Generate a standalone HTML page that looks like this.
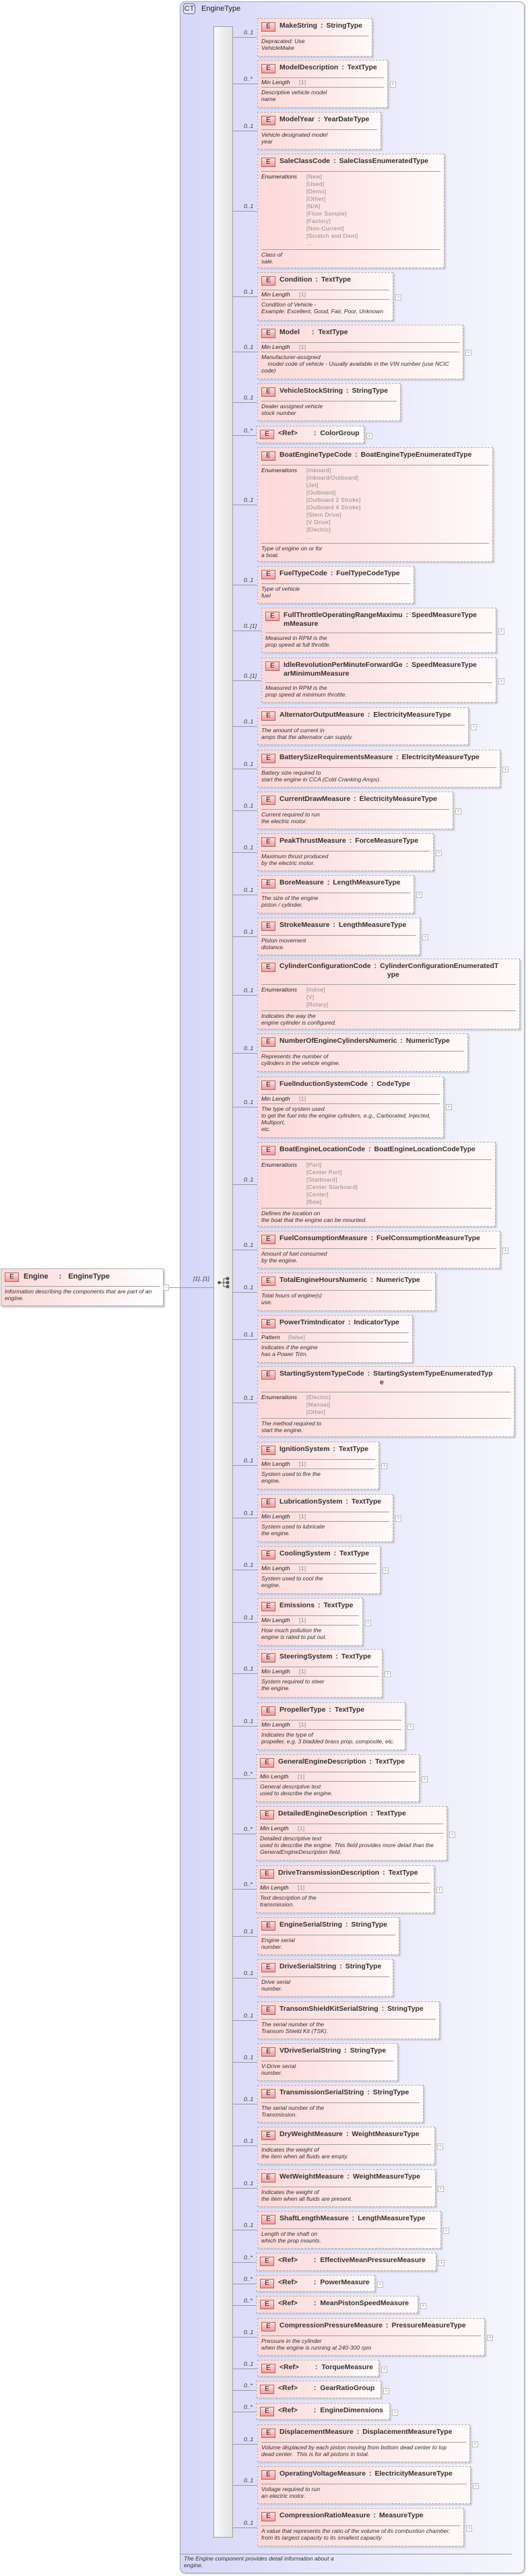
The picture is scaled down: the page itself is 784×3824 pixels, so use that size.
<!DOCTYPE html>
<html><head><meta charset="utf-8">
<style>
*{margin:0;padding:0;box-sizing:border-box}
body{width:784px;height:3824px;background:#fff;position:relative;font-family:"Liberation Sans",Arial,sans-serif;color:#333;overflow:hidden}
.ct{position:absolute;left:267px;top:2px;width:512px;height:3818px;border:1px solid #a8a8b8;border-radius:8px;background:linear-gradient(to right,#d6d6f8 0%,#e6e6fb 45%,#f6f6fd 100%);box-shadow:1px 1px 2px #bbb}
.cti{position:absolute;left:272px;top:5px;width:18px;height:16px;border:1px solid #6a6aa0;border-radius:4px;background:#e4e4fb;font:11px/14px "Liberation Sans",sans-serif;text-align:center;color:#333}
.ctt{position:absolute;left:299px;top:6px;font:11px/14px "Liberation Sans",sans-serif;color:#222}
.bar{position:absolute;left:317px;top:39px;width:29px;height:3728px;border:1px solid #a0a0a0;background:linear-gradient(to right,#fafafa,#e2e2e2)}
.b{position:absolute;left:382px;border:1px dashed #b0b0b0;background:linear-gradient(to right,#fdd8d8 0%,#fde6e6 45%,#fffafa 100%);box-shadow:2px 2px 2px #c8c8d0}
.e{position:absolute;left:5px;top:5px;width:21px;height:14px;border:1px solid #9a7070;background:linear-gradient(#fde0e0,#f49a9a);font:normal 10px/12px "Liberation Sans",sans-serif;color:#222;text-align:center}
.t{position:absolute;left:32px;top:4px;font:bold 10.4px/14px "Liberation Sans",sans-serif;white-space:nowrap;color:#333}
.t2{position:absolute;top:17px;font:bold 10.4px/14px "Liberation Sans",sans-serif;white-space:nowrap;color:#333}
.c{margin:0 5px}
.sp{height:25px}
.s{border-top:1px solid #a0a0a0;margin:0 5px}
.r{height:13px;font:italic 8.6px/13px "Liberation Sans",sans-serif;padding-left:5px;position:relative;color:#222}
.r .g{position:absolute;left:61px;top:0;font-style:normal;color:#888;letter-spacing:.3px}
.d{padding:2px 5px 0;font:italic 8.6px/10px "Liberation Sans",sans-serif;white-space:nowrap;color:#333}
.en{position:relative;padding:2px 5px 3px;font:italic 8.6px/11px "Liberation Sans",sans-serif;color:#222}
.en .v{margin-left:67px;font-style:normal;color:#8a8a8a;letter-spacing:.4px;font-size:8.4px}
.en .l{position:absolute;left:5px;top:2px}
.p{position:absolute;right:-13px;width:9px;height:9px;border:1px solid #bbb;background:#fff;font:normal 9px/7px "Liberation Sans",sans-serif;color:#aaa;text-align:center}
.ln{position:absolute;left:346px;width:36px;height:1px;background:#999}
.m{position:absolute;left:362px;font:italic 8.6px/10px "Liberation Sans",sans-serif;color:#333}
.foot{position:absolute;left:267px;top:3791px;width:493px;border-top:1px solid #999}
.ft{position:absolute;left:273px;top:3793px;font:italic 8.6px/10px "Liberation Sans",sans-serif;color:#333}
</style></head><body>
<div class="ct"></div>
<div class="cti">CT</div>
<div class="ctt">EngineType</div>
<div class="bar"></div>

<!-- Engine root -->
<div style="position:absolute;left:1px;top:1883px;width:242px;height:56px;border:1px solid #b0b0b0;background:linear-gradient(to right,#fdd8d8,#fff);box-shadow:2px 2px 2px #c8c8d0">
<i class="e">E</i><div class="t" style="left:33px;font-size:11px">Engine<span style="margin:0 10px 0 16px">:</span>EngineType</div>
<div class="sp"></div><div class="s"></div>
<div class="d">Information describing the components that are part of an<br>engine.</div>
</div>
<div style="position:absolute;left:242px;top:1907px;width:9px;height:9px;border:1px solid #bbb;background:#fff;font:9px/6px sans-serif;color:#aaa;text-align:center">−</div>
<div style="position:absolute;left:251px;top:1911px;width:66px;height:1px;background:#999"></div>
<div class="m" style="left:287px;top:1893px">[1]..[1]</div>
<svg style="position:absolute;left:323px;top:1895px" width="20" height="18" viewBox="0 0 20 18"><g fill="#555" stroke="#555"><line x1="2" y1="9" x2="9" y2="9"/><line x1="9" y1="3" x2="9" y2="15"/><line x1="9" y1="3" x2="15" y2="3"/><line x1="9" y1="9" x2="15" y2="9"/><line x1="9" y1="15" x2="15" y2="15"/><circle cx="2.5" cy="9" r="1.8"/><circle cx="15" cy="3" r="2"/><circle cx="15" cy="9" r="2"/><circle cx="15" cy="15" r="2"/></g></svg>

<!-- 1 -->
<div class="ln" style="top:55px"></div><div class="m" style="top:43px">0..1</div>
<div class="b" style="top:27px;height:57px;width:171px"><i class="e">E</i><div class="t">MakeString<span class="c">:</span>StringType</div><div class="sp"></div><div class="s"></div><div class="d">Depracated: Use<br>VehicleMake</div></div>
<!-- 2 -->
<div class="ln" style="top:124px"></div><div class="m" style="top:112px">0..*</div>
<div class="b" style="top:89px;height:71px;width:194px"><i class="e">E</i><div class="t">ModelDescription<span class="c">:</span>TextType</div><div class="sp"></div><div class="s"></div><div class="r"><i>Min Length</i><span class="g">[1]</span></div><div class="s"></div><div class="d">Descriptive vehicle model<br>name</div><i class="p" style="top:31px">+</i></div>
<!-- 3 -->
<div class="ln" style="top:194px"></div><div class="m" style="top:182px">0..1</div>
<div class="b" style="top:166px;height:56px;width:184px"><i class="e">E</i><div class="t">ModelYear<span class="c">:</span>YearDateType</div><div class="sp"></div><div class="s"></div><div class="d">Vehicle designated model<br>year</div></div>
<!-- 4 -->
<div class="ln" style="top:313px"></div><div class="m" style="top:301px">0..1</div>
<div class="b" style="top:228px;height:170px;width:278px"><i class="e">E</i><div class="t">SaleClassCode<span class="c">:</span>SaleClassEnumeratedType</div><div class="sp"></div><div class="s"></div><div class="en"><i class="l">Enumerations</i><div class="v">[New]<br>[Used]<br>[Demo]<br>[Other]<br>[N/A]<br>[Floor Sample]<br>[Factory]<br>[Non-Current]<br>[Scratch and Dent]<br>...</div></div><div class="s"></div><div class="d">Class of<br>sale.</div></div>
<!-- 5 -->
<div class="ln" style="top:440px"></div><div class="m" style="top:428px">0..1</div>
<div class="b" style="top:404px;height:72px;width:202px"><i class="e">E</i><div class="t">Condition<span class="c">:</span>TextType</div><div class="sp"></div><div class="s"></div><div class="r"><i>Min Length</i><span class="g">[1]</span></div><div class="s"></div><div class="d">Condition of Vehicle -<br>Example: Excellent, Good, Fair, Poor, Unknown</div><i class="p" style="top:32px">+</i></div>
<!-- 6 -->
<div class="ln" style="top:522px"></div><div class="m" style="top:510px">0..1</div>
<div class="b" style="top:482px;height:81px;width:306px"><i class="e">E</i><div class="t">Model<span class="c" style="margin:0 6px 0 18px">:</span>TextType</div><div class="sp"></div><div class="s"></div><div class="r"><i>Min Length</i><span class="g">[1]</span></div><div class="s"></div><div class="d">Manufacturer-assigned<br>&nbsp;&nbsp;&nbsp;&nbsp;model code of vehicle - Usually available in the VIN number (use NCIC<br>code)</div><i class="p" style="top:36px">+</i></div>
<!-- 7 -->
<div class="ln" style="top:597px"></div><div class="m" style="top:585px">0..1</div>
<div class="b" style="top:569px;height:56px;width:213px"><i class="e">E</i><div class="t">VehicleStockString<span class="c">:</span>StringType</div><div class="sp"></div><div class="s"></div><div class="d">Dealer assigned vehicle<br>stock number</div></div>
<!-- 8 -->
<div class="ln" style="top:646px"></div><div class="m" style="top:634px">0..*</div>
<div class="b" style="left:380px;top:632px;height:26px;width:161px"><i class="e">E</i><div class="t">&lt;Ref&gt;<span class="c" style="margin:0 6px 0 24px">:</span>ColorGroup</div><i class="p" style="top:10px">+</i></div>
<!-- 9 -->
<div class="ln" style="top:749px"></div><div class="m" style="top:737px">0..1</div>
<div class="b" style="top:664px;height:170px;width:350px"><i class="e">E</i><div class="t">BoatEngineTypeCode<span class="c">:</span>BoatEngineTypeEnumeratedType</div><div class="sp"></div><div class="s"></div><div class="en"><i class="l">Enumerations</i><div class="v">[Inboard]<br>[Inboard/Outboard]<br>[Jet]<br>[Outboard]<br>[Outboard 2 Stroke]<br>[Outboard 4 Stroke]<br>[Stern Drive]<br>[V Drive]<br>[Electric]<br>...</div></div><div class="s"></div><div class="d">Type of engine on or for<br>a boat.</div></div>
<!-- 10 -->
<div class="ln" style="top:868px"></div><div class="m" style="top:856px">0..1</div>
<div class="b" style="top:840px;height:56px;width:233px"><i class="e">E</i><div class="t">FuelTypeCode<span class="c">:</span>FuelTypeCodeType</div><div class="sp"></div><div class="s"></div><div class="d">Type of vehicle<br>fuel</div></div>
<!-- 11 -->
<div class="ln" style="top:936px;width:42px"></div><div class="m" style="top:924px">0..[1]</div>
<div class="b" style="left:388px;top:902px;height:67px;width:349px"><i class="e">E</i><div class="t">FullThrottleOperatingRangeMaximu<span class="c">:</span>SpeedMeasureType</div><div class="t2" style="left:32px">mMeasure</div><div class="sp" style="height:36px"></div><div class="s"></div><div class="d">Measured in RPM is the<br>prop speed at full throttle.</div><i class="p" style="top:30px">+</i></div>
<!-- 12 -->
<div class="ln" style="top:1010px;width:42px"></div><div class="m" style="top:998px">0..[1]</div>
<div class="b" style="left:388px;top:976px;height:67px;width:349px"><i class="e">E</i><div class="t">IdleRevolutionPerMinuteForwardGe<span class="c">:</span>SpeedMeasureType</div><div class="t2" style="left:32px">arMinimumMeasure</div><div class="sp" style="height:36px"></div><div class="s"></div><div class="d">Measured in RPM is the<br>prop speed at minimum throttle.</div><i class="p" style="top:30px">+</i></div>
<!-- 13 -->
<div class="ln" style="top:1078px"></div><div class="m" style="top:1066px">0..1</div>
<div class="b" style="top:1050px;height:56px;width:314px"><i class="e">E</i><div class="t">AlternatorOutputMeasure<span class="c">:</span>ElectricityMeasureType</div><div class="sp"></div><div class="s"></div><div class="d">The amount of current in<br>amps that the alternator can supply.</div><i class="p" style="top:24px">+</i></div>
<!-- 14 -->
<div class="ln" style="top:1141px"></div><div class="m" style="top:1129px">0..1</div>
<div class="b" style="top:1113px;height:56px;width:361px"><i class="e">E</i><div class="t">BatterySizeRequirementsMeasure<span class="c">:</span>ElectricityMeasureType</div><div class="sp"></div><div class="s"></div><div class="d">Battery size required to<br>start the engine in CCA (Cold Cranking Amps).</div><i class="p" style="top:24px">+</i></div>
<!-- 15 -->
<div class="ln" style="top:1203px"></div><div class="m" style="top:1191px">0..1</div>
<div class="b" style="top:1175px;height:56px;width:291px"><i class="e">E</i><div class="t">CurrentDrawMeasure<span class="c">:</span>ElectricityMeasureType</div><div class="sp"></div><div class="s"></div><div class="d">Current required to run<br>the electric motor.</div><i class="p" style="top:24px">+</i></div>
<!-- 16 -->
<div class="ln" style="top:1265px"></div><div class="m" style="top:1253px">0..1</div>
<div class="b" style="top:1237px;height:56px;width:262px"><i class="e">E</i><div class="t">PeakThrustMeasure<span class="c">:</span>ForceMeasureType</div><div class="sp"></div><div class="s"></div><div class="d">Maximum thrust produced<br>by the electric motor.</div><i class="p" style="top:24px">+</i></div>
<!-- 17 -->
<div class="ln" style="top:1328px"></div><div class="m" style="top:1316px">0..1</div>
<div class="b" style="top:1299px;height:57px;width:233px"><i class="e">E</i><div class="t">BoreMeasure<span class="c">:</span>LengthMeasureType</div><div class="sp"></div><div class="s"></div><div class="d">The size of the engine<br>piston / cylinder.</div><i class="p" style="top:24px">+</i></div>
<!-- 18 -->
<div class="ln" style="top:1390px"></div><div class="m" style="top:1378px">0..1</div>
<div class="b" style="top:1362px;height:56px;width:242px"><i class="e">E</i><div class="t">StrokeMeasure<span class="c">:</span>LengthMeasureType</div><div class="sp"></div><div class="s"></div><div class="d">Piston movement<br>distance.</div><i class="p" style="top:24px">+</i></div>
<!-- 19 -->
<div class="ln" style="top:1477px"></div><div class="m" style="top:1465px">0..1</div>
<div class="b" style="top:1423px;height:105px;width:390px"><i class="e">E</i><div class="t">CylinderConfigurationCode<span class="c">:</span>CylinderConfigurationEnumeratedT</div><div class="t2" style="left:192px">ype</div><div class="sp" style="height:37px"></div><div class="s"></div><div class="en"><i class="l">Enumerations</i><div class="v">[Inline]<br>[V]<br>[Rotary]</div></div><div class="s"></div><div class="d">Indicates the way the<br>engine cylinder is configured.</div></div>
<!-- 20 -->
<div class="ln" style="top:1563px"></div><div class="m" style="top:1551px">0..1</div>
<div class="b" style="top:1534px;height:57px;width:313px"><i class="e">E</i><div class="t">NumberOfEngineCylindersNumeric<span class="c">:</span>NumericType</div><div class="sp"></div><div class="s"></div><div class="d">Represents the number of<br>cylinders in the vehicle engine.</div></div>
<!-- 21 -->
<div class="ln" style="top:1643px"></div><div class="m" style="top:1631px">0..1</div>
<div class="b" style="top:1598px;height:91px;width:277px"><i class="e">E</i><div class="t">FuelInductionSystemCode<span class="c">:</span>CodeType</div><div class="sp"></div><div class="s"></div><div class="r"><i>Min Length</i><span class="g">[1]</span></div><div class="s"></div><div class="d">The type of system used<br>to get the fuel into the engine cylinders, e.g., Carborated, Injected,<br>Multiport,<br>etc.</div><i class="p" style="top:40px">+</i></div>
<!-- 22 -->
<div class="ln" style="top:1758px"></div><div class="m" style="top:1746px">0..1</div>
<div class="b" style="top:1695px;height:126px;width:354px"><i class="e">E</i><div class="t">BoatEngineLocationCode<span class="c">:</span>BoatEngineLocationCodeType</div><div class="sp"></div><div class="s"></div><div class="en"><i class="l">Enumerations</i><div class="v">[Port]<br>[Center Port]<br>[Starboard]<br>[Center Starboard]<br>[Center]<br>[Bow]</div></div><div class="s"></div><div class="d">Defines the location on<br>the boat that the engine can be mounted.</div></div>
<!-- 23 -->
<div class="ln" style="top:1855px"></div><div class="m" style="top:1843px">0..1</div>
<div class="b" style="top:1827px;height:56px;width:361px"><i class="e">E</i><div class="t">FuelConsumptionMeasure<span class="c">:</span>FuelConsumptionMeasureType</div><div class="sp"></div><div class="s"></div><div class="d">Amount of fuel consumed<br>by the engine.</div><i class="p" style="top:24px">+</i></div>
<!-- 24 -->
<div class="ln" style="top:1918px"></div><div class="m" style="top:1906px">0..1</div>
<div class="b" style="top:1889px;height:57px;width:265px"><i class="e">E</i><div class="t">TotalEngineHoursNumeric<span class="c">:</span>NumericType</div><div class="sp"></div><div class="s"></div><div class="d">Total hours of engine(s)<br>use.</div></div>
<!-- 25 -->
<div class="ln" style="top:1988px"></div><div class="m" style="top:1976px">0..1</div>
<div class="b" style="top:1952px;height:71px;width:231px"><i class="e">E</i><div class="t">PowerTrimIndicator<span class="c">:</span>IndicatorType</div><div class="sp"></div><div class="s"></div><div class="r"><i>Pattern</i><span class="g" style="left:45px">[false]</span></div><div class="s"></div><div class="d">Indicates if the engine<br>has a Power Trim.</div></div>
<!-- 26 -->
<div class="ln" style="top:2082px"></div><div class="m" style="top:2070px">0..1</div>
<div class="b" style="top:2028px;height:105px;width:382px"><i class="e">E</i><div class="t">StartingSystemTypeCode<span class="c">:</span>StartingSystemTypeEnumeratedTyp</div><div class="t2" style="left:181px">e</div><div class="sp" style="height:37px"></div><div class="s"></div><div class="en"><i class="l">Enumerations</i><div class="v">[Electric]<br>[Manual]<br>[Other]</div></div><div class="s"></div><div class="d">The method required to<br>start the engine.</div></div>
<!-- 27 -->
<div class="ln" style="top:2175px"></div><div class="m" style="top:2163px">0..1</div>
<div class="b" style="top:2140px;height:71px;width:181px"><i class="e">E</i><div class="t">IgnitionSystem<span class="c">:</span>TextType</div><div class="sp"></div><div class="s"></div><div class="r"><i>Min Length</i><span class="g">[1]</span></div><div class="s"></div><div class="d">System used to fire the<br>engine.</div><i class="p" style="top:31px">+</i></div>
<!-- 28 -->
<div class="ln" style="top:2253px"></div><div class="m" style="top:2241px">0..1</div>
<div class="b" style="top:2218px;height:71px;width:202px"><i class="e">E</i><div class="t">LubricationSystem<span class="c">:</span>TextType</div><div class="sp"></div><div class="s"></div><div class="r"><i>Min Length</i><span class="g">[1]</span></div><div class="s"></div><div class="d">System used to lubricate<br>the engine.</div><i class="p" style="top:31px">+</i></div>
<!-- 29 -->
<div class="ln" style="top:2330px"></div><div class="m" style="top:2318px">0..1</div>
<div class="b" style="top:2295px;height:71px;width:183px"><i class="e">E</i><div class="t">CoolingSystem<span class="c">:</span>TextType</div><div class="sp"></div><div class="s"></div><div class="r"><i>Min Length</i><span class="g">[1]</span></div><div class="s"></div><div class="d">System used to cool the<br>engine.</div><i class="p" style="top:31px">+</i></div>
<!-- 30 -->
<div class="ln" style="top:2408px"></div><div class="m" style="top:2396px">0..1</div>
<div class="b" style="top:2372px;height:71px;width:157px"><i class="e">E</i><div class="t">Emissions<span class="c">:</span>TextType</div><div class="sp"></div><div class="s"></div><div class="r"><i>Min Length</i><span class="g">[1]</span></div><div class="s"></div><div class="d">How much pollution the<br>engine is rated to put out.</div><i class="p" style="top:32px">+</i></div>
<!-- 31 -->
<div class="ln" style="top:2484px"></div><div class="m" style="top:2472px">0..1</div>
<div class="b" style="top:2448px;height:72px;width:186px"><i class="e">E</i><div class="t">SteeringSystem<span class="c">:</span>TextType</div><div class="sp"></div><div class="s"></div><div class="r"><i>Min Length</i><span class="g">[1]</span></div><div class="s"></div><div class="d">System required to steer<br>the engine.</div><i class="p" style="top:32px">+</i></div>
<!-- 32 -->
<div class="ln" style="top:2562px"></div><div class="m" style="top:2550px">0..1</div>
<div class="b" style="top:2527px;height:71px;width:220px"><i class="e">E</i><div class="t">PropellerType<span class="c">:</span>TextType</div><div class="sp"></div><div class="s"></div><div class="r"><i>Min Length</i><span class="g">[1]</span></div><div class="s"></div><div class="d">Indicates the type of<br>propeller, e.g. 3 bladded brass prop, composite, etc.</div><i class="p" style="top:31px">+</i></div>
<!-- 33 -->
<div class="ln" style="top:2640px"></div><div class="m" style="top:2628px">0..*</div>
<div class="b" style="left:380px;top:2604px;height:71px;width:243px"><i class="e">E</i><div class="t">GeneralEngineDescription<span class="c">:</span>TextType</div><div class="sp"></div><div class="s"></div><div class="r"><i>Min Length</i><span class="g">[1]</span></div><div class="s"></div><div class="d">General descriptive text<br>used to describe the engine.</div><i class="p" style="top:32px">+</i></div>
<!-- 34 -->
<div class="ln" style="top:2722px"></div><div class="m" style="top:2710px">0..*</div>
<div class="b" style="left:380px;top:2681px;height:81px;width:284px"><i class="e">E</i><div class="t">DetailedEngineDescription<span class="c">:</span>TextType</div><div class="sp"></div><div class="s"></div><div class="r"><i>Min Length</i><span class="g">[1]</span></div><div class="s"></div><div class="d">Detailed descriptive text<br>used to describe the engine. This field provides more detail than the<br>GeneralEngineDescription field.</div><i class="p" style="top:37px">+</i></div>
<!-- 35 -->
<div class="ln" style="top:2804px"></div><div class="m" style="top:2792px">0..*</div>
<div class="b" style="left:380px;top:2769px;height:71px;width:265px"><i class="e">E</i><div class="t">DriveTransmissionDescription<span class="c">:</span>TextType</div><div class="sp"></div><div class="s"></div><div class="r"><i>Min Length</i><span class="g">[1]</span></div><div class="s"></div><div class="d">Text description of the<br>transmission.</div><i class="p" style="top:31px">+</i></div>
<!-- 36 -->
<div class="ln" style="top:2874px"></div><div class="m" style="top:2862px">0..1</div>
<div class="b" style="top:2846px;height:56px;width:211px"><i class="e">E</i><div class="t">EngineSerialString<span class="c">:</span>StringType</div><div class="sp"></div><div class="s"></div><div class="d">Engine serial<br>number.</div></div>
<!-- 37 -->
<div class="ln" style="top:2936px"></div><div class="m" style="top:2924px">0..1</div>
<div class="b" style="top:2908px;height:56px;width:202px"><i class="e">E</i><div class="t">DriveSerialString<span class="c">:</span>StringType</div><div class="sp"></div><div class="s"></div><div class="d">Drive serial<br>number.</div></div>
<!-- 38 -->
<div class="ln" style="top:2999px"></div><div class="m" style="top:2987px">0..1</div>
<div class="b" style="top:2971px;height:56px;width:271px"><i class="e">E</i><div class="t">TransomShieldKitSerialString<span class="c">:</span>StringType</div><div class="sp"></div><div class="s"></div><div class="d">The serial number of the<br>Transom Shield Kit (TSK).</div></div>
<!-- 39 -->
<div class="ln" style="top:3061px"></div><div class="m" style="top:3049px">0..1</div>
<div class="b" style="top:3033px;height:56px;width:209px"><i class="e">E</i><div class="t">VDriveSerialString<span class="c">:</span>StringType</div><div class="sp"></div><div class="s"></div><div class="d">V-Drive serial<br>number.</div></div>
<!-- 40 -->
<div class="ln" style="top:3123px"></div><div class="m" style="top:3111px">0..1</div>
<div class="b" style="top:3095px;height:56px;width:247px"><i class="e">E</i><div class="t">TransmissionSerialString<span class="c">:</span>StringType</div><div class="sp"></div><div class="s"></div><div class="d">The serial number of the<br>Transmission.</div></div>
<!-- 41 -->
<div class="ln" style="top:3185px"></div><div class="m" style="top:3173px">0..1</div>
<div class="b" style="top:3157px;height:56px;width:264px"><i class="e">E</i><div class="t">DryWeightMeasure<span class="c">:</span>WeightMeasureType</div><div class="sp"></div><div class="s"></div><div class="d">Indicates the weight of<br>the item when all fluids are empty.</div><i class="p" style="top:24px">+</i></div>
<!-- 42 -->
<div class="ln" style="top:3248px"></div><div class="m" style="top:3236px">0..1</div>
<div class="b" style="top:3220px;height:56px;width:265px"><i class="e">E</i><div class="t">WetWeightMeasure<span class="c">:</span>WeightMeasureType</div><div class="sp"></div><div class="s"></div><div class="d">Indicates the weight of<br>the item when all fluids are present.</div><i class="p" style="top:24px">+</i></div>
<!-- 43 -->
<div class="ln" style="top:3310px"></div><div class="m" style="top:3298px">0..1</div>
<div class="b" style="top:3282px;height:56px;width:273px"><i class="e">E</i><div class="t">ShaftLengthMeasure<span class="c">:</span>LengthMeasureType</div><div class="sp"></div><div class="s"></div><div class="d">Length of the shaft on<br>which the prop mounts.</div><i class="p" style="top:24px">+</i></div>
<!-- 44 -->
<div class="ln" style="top:3358px"></div><div class="m" style="top:3346px">0..*</div>
<div class="b" style="left:380px;top:3344px;height:27px;width:268px"><i class="e">E</i><div class="t">&lt;Ref&gt;<span class="c" style="margin:0 6px 0 24px">:</span>EffectiveMeanPressureMeasure</div><i class="p" style="top:10px">+</i></div>
<!-- 45 -->
<div class="ln" style="top:3390px"></div><div class="m" style="top:3378px">0..*</div>
<div class="b" style="left:380px;top:3377px;height:25px;width:177px"><i class="e">E</i><div class="t">&lt;Ref&gt;<span class="c" style="margin:0 6px 0 24px">:</span>PowerMeasure</div><i class="p" style="top:9px">+</i></div>
<!-- 46 -->
<div class="ln" style="top:3422px"></div><div class="m" style="top:3410px">0..*</div>
<div class="b" style="left:380px;top:3408px;height:26px;width:241px"><i class="e">E</i><div class="t">&lt;Ref&gt;<span class="c" style="margin:0 6px 0 24px">:</span>MeanPistonSpeedMeasure</div><i class="p" style="top:10px">+</i></div>
<!-- 47 -->
<div class="ln" style="top:3469px"></div><div class="m" style="top:3457px">0..1</div>
<div class="b" style="top:3441px;height:56px;width:338px"><i class="e">E</i><div class="t">CompressionPressureMeasure<span class="c">:</span>PressureMeasureType</div><div class="sp"></div><div class="s"></div><div class="d">Pressure in the cylinder<br>when the engine is running at 240-300 rpm</div><i class="p" style="top:24px">+</i></div>
<!-- 48 -->
<div class="ln" style="top:3516px"></div><div class="m" style="top:3504px">0..1</div>
<div class="b" style="top:3503px;height:25px;width:181px"><i class="e">E</i><div class="t">&lt;Ref&gt;<span class="c" style="margin:0 6px 0 24px">:</span>TorqueMeasure</div><i class="p" style="top:9px">+</i></div>
<!-- 49 -->
<div class="ln" style="top:3548px"></div><div class="m" style="top:3536px">0..*</div>
<div class="b" style="left:380px;top:3534px;height:26px;width:186px"><i class="e">E</i><div class="t">&lt;Ref&gt;<span class="c" style="margin:0 6px 0 24px">:</span>GearRatioGroup</div><i class="p" style="top:10px">+</i></div>
<!-- 50 -->
<div class="ln" style="top:3580px"></div><div class="m" style="top:3568px">0..*</div>
<div class="b" style="left:380px;top:3567px;height:25px;width:199px"><i class="e">E</i><div class="t">&lt;Ref&gt;<span class="c" style="margin:0 6px 0 24px">:</span>EngineDimensions</div><i class="p" style="top:9px">+</i></div>
<!-- 51 -->
<div class="ln" style="top:3628px"></div><div class="m" style="top:3616px">0..1</div>
<div class="b" style="top:3599px;height:56px;width:316px"><i class="e">E</i><div class="t">DisplacementMeasure<span class="c">:</span>DisplacementMeasureType</div><div class="sp"></div><div class="s"></div><div class="d">Volume displaced by each piston moving from bottom dead center to top<br>dead center.&nbsp; This is for all pistons in total.</div><i class="p" style="top:24px">+</i></div>
<!-- 52 -->
<div class="ln" style="top:3689px"></div><div class="m" style="top:3677px">0..1</div>
<div class="b" style="top:3661px;height:56px;width:317px"><i class="e">E</i><div class="t">OperatingVoltageMeasure<span class="c">:</span>ElectricityMeasureType</div><div class="sp"></div><div class="s"></div><div class="d">Voltage required to run<br>an electric motor.</div><i class="p" style="top:24px">+</i></div>
<!-- 53 -->
<div class="ln" style="top:3752px"></div><div class="m" style="top:3740px">0..1</div>
<div class="b" style="top:3723px;height:57px;width:307px"><i class="e">E</i><div class="t">CompressionRatioMeasure<span class="c">:</span>MeasureType</div><div class="sp"></div><div class="s"></div><div class="d">A value that represents the ratio of the volume of its combustion chamber;<br>from its largest capacity to its smallest capacity</div><i class="p" style="top:25px">+</i></div>

<div class="foot"></div>
<div class="ft">The Engine component provides detail information about a<br>engine.</div>
</body></html>
